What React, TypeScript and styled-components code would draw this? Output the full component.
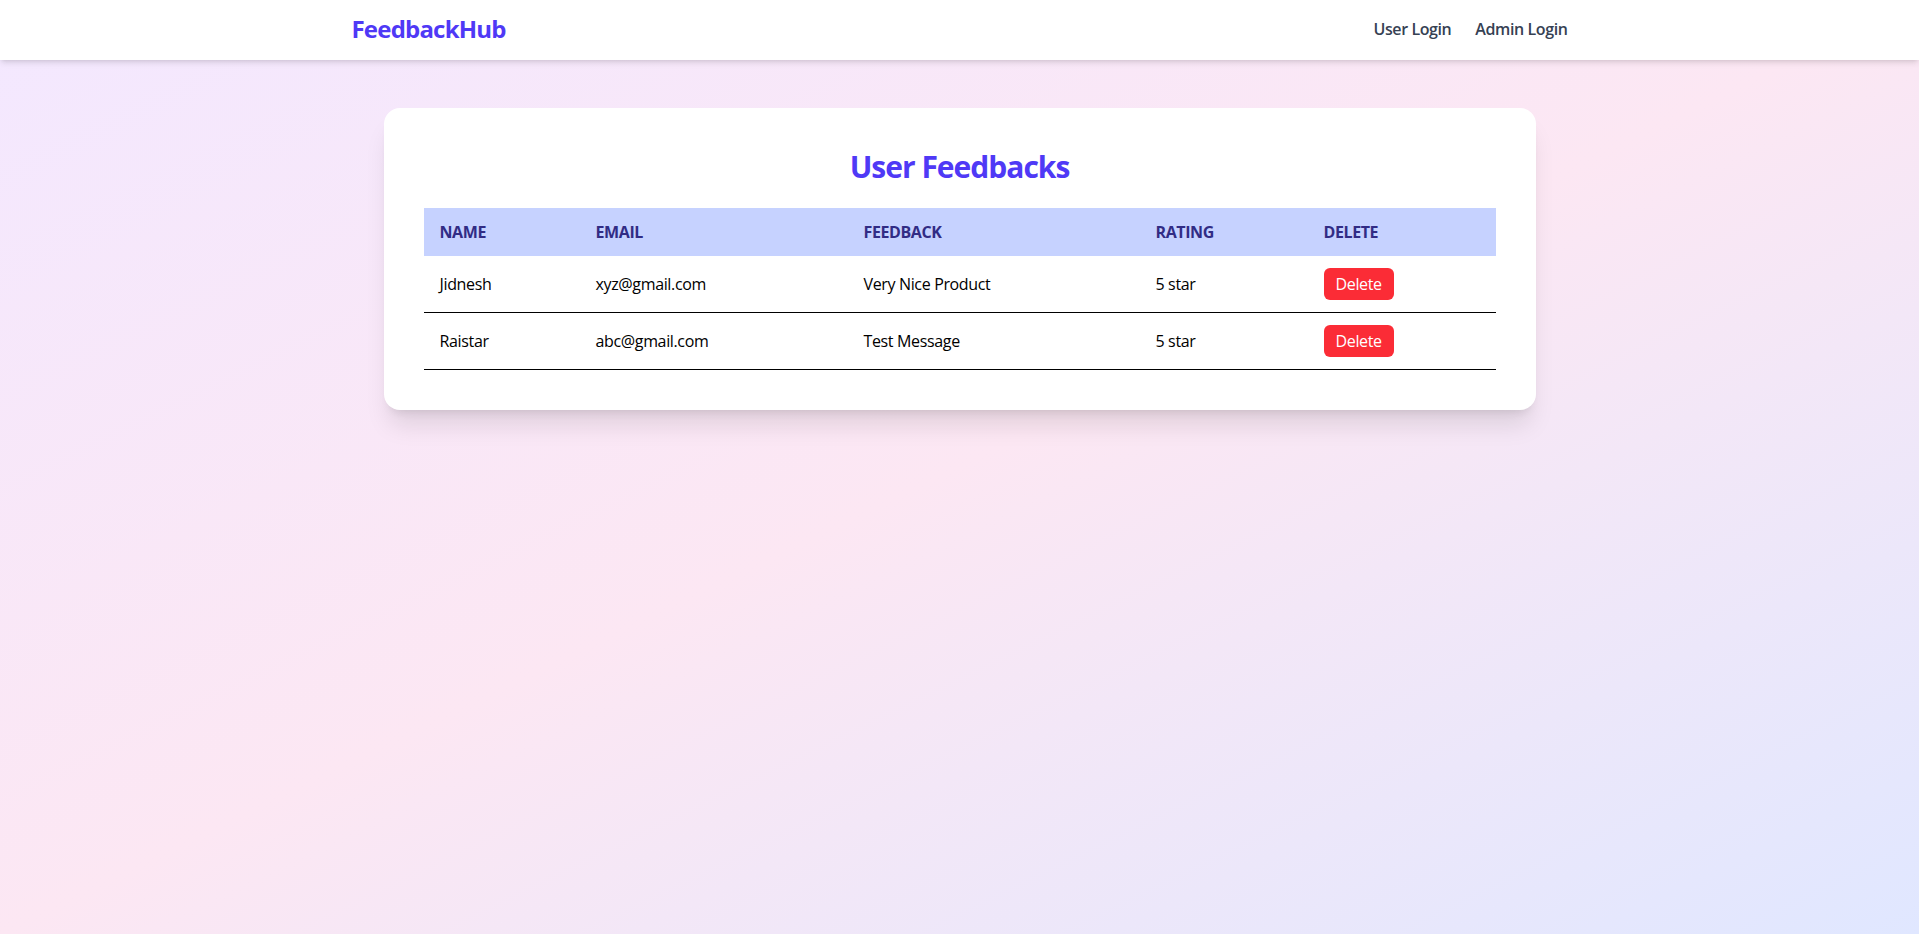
import React from "react";
import styled, { createGlobalStyle } from "styled-components";

const GlobalStyle = createGlobalStyle`
  * { box-sizing: border-box; }
  html, body { margin: 0; padding: 0; }
  body {
    font-family: "Open Sans", "Noto Sans", sans-serif;
    color: #000;
  }
`;

const Page = styled.div`
  min-height: 934px;
  background: linear-gradient(to bottom right in oklab, #f3e8ff, #fce7f3, #e0e7ff);
`;

const NavBar = styled.nav`
  background: #fff;
  height: 60px;
  box-shadow: 0 4px 6px -1px rgba(0, 0, 0, 0.1), 0 2px 4px -2px rgba(0, 0, 0, 0.1);
`;

const NavInner = styled.div`
  max-width: 1280px;
  height: 100%;
  margin: 0 auto;
  padding: 0 32px 3px;
  display: flex;
  align-items: center;
  justify-content: space-between;
`;

const Logo = styled.div`
  font-size: 24px;
  line-height: 32px;
  font-weight: 700;
  letter-spacing: -0.8px;
  color: #4f39f6;
`;

const NavLinks = styled.div`
  display: flex;
  gap: 24px;
`;

const NavLink = styled.a`
  font-size: 16px;
  line-height: 24px;
  font-weight: 600;
  letter-spacing: -0.4px;
  color: #364153;
  text-decoration: none;
  cursor: pointer;
`;

const Main = styled.main`
  padding-top: 48px;
`;

const Card = styled.section`
  max-width: 1152px;
  margin: 0 auto;
  background: #fff;
  border-radius: 16px;
  padding: 40px;
  box-shadow: 0 20px 25px -5px rgba(0, 0, 0, 0.1), 0 8px 10px -6px rgba(0, 0, 0, 0.1);
`;

const Title = styled.h2`
  margin: 0 0 24px;
  padding-top: 1px;
  height: 36px;
  text-align: center;
  font-size: 30px;
  line-height: 36px;
  font-weight: 700;
  letter-spacing: -1px;
  color: #4f39f6;
`;

const Table = styled.table`
  width: 100%;
  border-collapse: collapse;
  table-layout: fixed;
`;

const HeadRow = styled.tr`
  background: #c6d2ff;
`;

const Th = styled.th<{ $w: number }>`
  width: ${(p) => p.$w}px;
  padding: 12px 16px;
  text-align: left;
  font-size: 16px;
  line-height: 24px;
  font-weight: 700;
  letter-spacing: -0.4px;
  text-transform: uppercase;
  color: #312c85;
`;

const Row = styled.tr`
  border-bottom: 1px solid #000;
`;

const Td = styled.td`
  padding: 12px 16px;
  font-size: 16px;
  line-height: 24px;
  letter-spacing: -0.35px;
  color: #000;
  vertical-align: middle;
`;

const DeleteButton = styled.button`
  font-family: inherit;
  font-size: 16px;
  line-height: 24px;
  letter-spacing: -0.35px;
  padding: 4px 12px;
  border: none;
  border-radius: 6px;
  background: #fb2c36;
  color: #fff;
  cursor: pointer;
`;

const columns = [
  { label: "Name", w: 156 },
  { label: "Email", w: 268 },
  { label: "Feedback", w: 292 },
  { label: "Rating", w: 168 },
  { label: "Delete", w: 188 },
];

const feedbacks = [
  { name: "Jidnesh", email: "xyz@gmail.com", feedback: "Very Nice Product", rating: "5 star" },
  { name: "Raistar", email: "abc@gmail.com", feedback: "Test Message", rating: "5 star" },
];

export default function App() {
  return (
    <>
      <GlobalStyle />
      <Page>
        <NavBar>
          <NavInner>
            <Logo>FeedbackHub</Logo>
            <NavLinks>
              <NavLink>User Login</NavLink>
              <NavLink>Admin Login</NavLink>
            </NavLinks>
          </NavInner>
        </NavBar>
        <Main>
          <Card>
            <Title>User Feedbacks</Title>
            <Table>
              <thead>
                <HeadRow>
                  {columns.map((c) => (
                    <Th key={c.label} $w={c.w}>
                      {c.label}
                    </Th>
                  ))}
                </HeadRow>
              </thead>
              <tbody>
                {feedbacks.map((f) => (
                  <Row key={f.email}>
                    <Td>{f.name}</Td>
                    <Td>{f.email}</Td>
                    <Td>{f.feedback}</Td>
                    <Td>{f.rating}</Td>
                    <Td>
                      <DeleteButton>Delete</DeleteButton>
                    </Td>
                  </Row>
                ))}
              </tbody>
            </Table>
          </Card>
        </Main>
      </Page>
    </>
  );
}
